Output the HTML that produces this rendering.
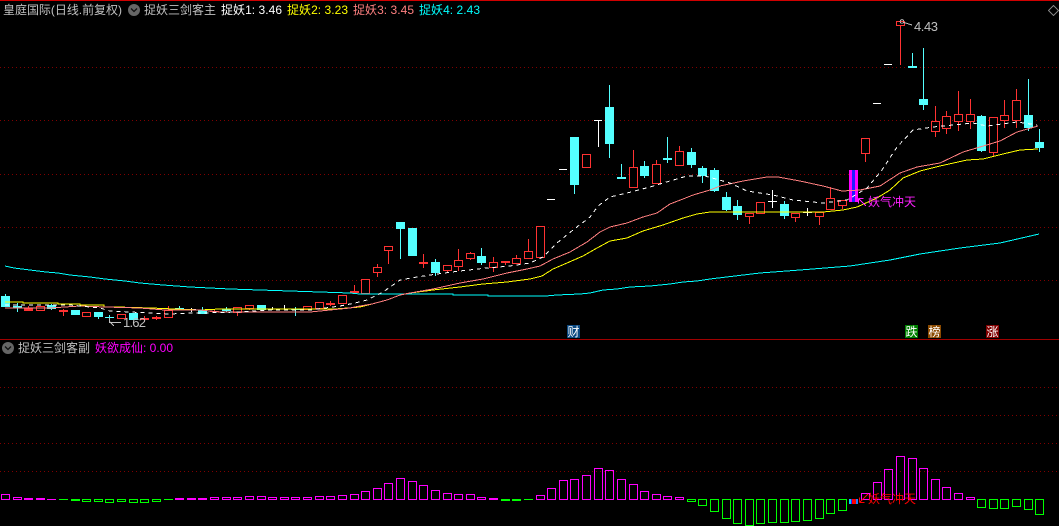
<!DOCTYPE html>
<html><head><meta charset="utf-8"><title>捉妖三剑客</title>
<style>
html,body{margin:0;padding:0;background:#000;width:1059px;height:526px;overflow:hidden}
svg{display:block}
text{font-family:"WenQuanYi Zen Hei","Liberation Sans","Noto Sans CJK SC",sans-serif;font-size:12px}
.n{font-family:"Liberation Sans",sans-serif;font-size:13px}
</style></head><body>
<svg width="1059" height="526" viewBox="0 0 1059 526" xmlns="http://www.w3.org/2000/svg">
<rect width="1059" height="526" fill="#000"/>
<g shape-rendering="crispEdges">
<rect x="0" y="0" width="1059" height="1" fill="#d00000"/>
<rect x="0" y="339" width="1059" height="1" fill="#a00000"/>
<path d="M0 67.5H1059M0 120.5H1059M0 174.5H1059M0 227.5H1059M0 280.5H1059M0 387.5H1059M0 415.5H1059M0 443.5H1059M0 471.5H1059" stroke="#800000" stroke-width="1" stroke-dasharray="1 3" fill="none"/>
<!-- wicks -->
<path fill="none" stroke="#ff3232" d="M28.5 306V311M63.5 309V316M144.5 316V322M156.5 316V320M168.5 306V310M214.5 310V313M237.5 312V316M249.5 308V310M330.5 301V306M354.5 285V293M377.5 264V277M388.5 250V264M423.5 254V268M447.5 270V272M458.5 249V271M470.5 252V260M493.5 257V272M505.5 261V265M516.5 255V258M528.5 239V251M633.5 150V167M656.5 160V164M679.5 146V166M749.5 216V224M795.5 217V222M819.5 216V225M830.5 187V198M842.5 205V209M865.5 153V162M900.5 25V65M935.5 106V137M946.5 111V134M958.5 91V131M970.5 99V129M993.5 152V156M1004.5 100V128M1016.5 89V128"/>
<path fill="none" stroke="#54ffff" d="M5.5 294V296M17.5 303V312M51.5 304V310M98.5 317V319M109.5 315V323M179.5 306V308M202.5 307V314M226.5 307V312M295.5 307V316M400.5 229V259M435.5 259V276M481.5 248V265M574.5 185V194M609.5 85V158M621.5 164V178M644.5 161V178M667.5 137V163M691.5 148V168M702.5 166V183M714.5 168V192M726.5 192V211M737.5 200V220M784.5 201V219M912.5 53V66M923.5 48V110M981.5 115V152M1028.5 79V131M1039.5 129V152"/>
<path fill="none" stroke="#fff" d="M191.5 308V312M187 309.5H196M272.5 307V310M284.5 305V310M547 199.5H555M559 169.5H567M594 120.5H602M598.5 120V147M772.5 190V208M768 201.5H777M807.5 208V216M803 212.5H812M873 103.5H881M884 64.5H892"/>
<!-- red hollow bodies -->
<path fill="#000" stroke="#ff3232" d="M36.5 306.5h8V310.5h-8zM82.5 312.5h8V316.5h-8zM117.5 314.5h8V318.5h-8zM164.5 310.5h8V317.5h-8zM233.5 307.5h8V312.5h-8zM245.5 305.5h8V308.5h-8zM303.5 306.5h8V309.5h-8zM315.5 302.5h8V308.5h-8zM338.5 295.5h8V303.5h-8zM361.5 279.5h8V293.5h-8zM373.5 267.5h8V272.5h-8zM384.5 246.5h8V250.5h-8zM443.5 265.5h8V270.5h-8zM454.5 260.5h8V266.5h-8zM466.5 253.5h8V258.5h-8zM489.5 262.5h8V267.5h-8zM512.5 258.5h8V263.5h-8zM524.5 251.5h8V258.5h-8zM536.5 226.5h8V257.5h-8zM582.5 154.5h8V167.5h-8zM629.5 167.5h8V187.5h-8zM652.5 164.5h8V183.5h-8zM675.5 151.5h8V165.5h-8zM745.5 213.5h8V216.5h-8zM756.5 202.5h8V213.5h-8zM791.5 213.5h8V217.5h-8zM815.5 212.5h8V216.5h-8zM826.5 198.5h8V209.5h-8zM838.5 200.5h8V205.5h-8zM861.5 138.5h8V153.5h-8zM896.5 21.5h8V25.5h-8zM931.5 121.5h8V131.5h-8zM942.5 116.5h8V128.5h-8zM954.5 114.5h8V121.5h-8zM966.5 114.5h8V121.5h-8zM989.5 117.5h8V152.5h-8zM1000.5 115.5h8V120.5h-8zM1012.5 100.5h8V120.5h-8z"/>
<!-- red solid bodies -->
<path fill="#ff3232" d="M24 308h9v3h-9zM59 310h9v2h-9zM140 318h9v2h-9zM152 317h9v2h-9zM210 311h9v1h-9zM326 303h9v2h-9zM350 291h9v2h-9zM419 262h9v2h-9zM501 261h9v2h-9z"/>
<!-- cyan solid bodies -->
<path fill="#54ffff" d="M1 296h9v11h-9zM13 306h9v2h-9zM47 305h9v4h-9zM71 310h9v5h-9zM94 312h9v5h-9zM105 317h9v1h-9zM129 313h9v7h-9zM175 308h9v2h-9zM198 310h9v4h-9zM222 309h9v2h-9zM257 305h9v5h-9zM291 309h9v1h-9zM396 222h9v7h-9zM408 228h9v28h-9zM431 262h9v11h-9zM477 256h9v7h-9zM570 137h9v48h-9zM605 107h9v37h-9zM617 177h9v2h-9zM640 166h9v10h-9zM663 158h9v2h-9zM687 152h9v13h-9zM698 168h9v8h-9zM710 170h9v21h-9zM722 197h9v13h-9zM733 206h9v9h-9zM780 204h9v12h-9zM908 66h9v2h-9zM919 99h9v6h-9zM977 116h9v35h-9zM1024 115h9v13h-9zM1035 142h9v6h-9z"/>
<!-- purple bar -->
<rect x="849" y="170" width="3" height="32" fill="#ff00ff"/><rect x="852" y="170" width="3" height="32" fill="#2020ff"/><rect x="855" y="170" width="3" height="32" fill="#ff00ff"/>
<!-- lines -->
<polyline fill="none" stroke="#00ffff" points="5,266 14,268 30,270 46,272 58,273 70,275 90,277 105,279 125,281 140,283 163,285 190,287 210,288 230,289 260,290 290,291 320,292 350,293 360,294 453,294 453,295 488,295 488,296 546,296 557,295 580,294 590,293 603,290 617,289 630,287 650,286 670,284 683,282 697,281 710,279 760,273 800,270 850,266 890,260 920,254 960,248 1000,243 1039,234"/>
<polyline fill="none" stroke="#ffff00" points="5,302 23,302 23,303 58,303 58,304 80,304 80,305 104,305 104,307 116,307 151,308 174,309 200,310 220,309 310,309 335,309 348,308 360,307 372,304 387,300 400,295 410,293 433,290 460,287 483,284 507,282 530,279 542,276 553,269 567,263 583,256 597,248 610,241 627,238 643,231 663,225 683,218 697,214 710,212 823,212 843,210 857,207 877,198 890,190 903,178 920,171 940,166 967,160 983,159 1003,154 1020,150 1038,149"/>
<polyline fill="none" stroke="#ff8080" points="5,308 50,308 80,306 105,307 140,308 165,310 200,310 220,312 310,312 320,311 340,309 350,308 360,306 372,304 387,300 400,295 410,293 433,289 460,283 483,279 507,273 527,269 540,266 553,259 570,252 587,242 600,232 610,227 627,223 643,217 657,213 670,204 683,199 693,195 710,190 720,186 743,181 767,177 778,177 800,181 823,186 842,191 860,190 880,186 900,173 917,167 940,163 963,152 980,147 1000,141 1017,132 1038,126"/>
<polyline fill="none" stroke="#fff" stroke-dasharray="4 4" points="5,305 70,305 100,308 110,311 130,312 150,313 170,314 190,313 200,313 240,312 270,310 310,310 340,306 355,303 367,300 383,292 400,280 417,277 437,274 460,271 487,268 510,266 530,263 543,257 557,243 573,230 590,217 598,206 610,197 627,193 650,187 670,181 687,176 705,176 730,183 747,191 773,195 793,200 823,203 847,200 867,188 882,170 897,147 913,130 933,127 973,123 987,126 1017,122 1037,125"/>
<!-- sub chart magenta -->
<path fill="none" stroke="#ff00ff" d="M1.5 494.5h8V499.5h-8zM13.5 497.5h8V499.5h-8zM210.5 497.5h8V499.5h-8zM222.5 497.5h8V499.5h-8zM233.5 497.5h8V499.5h-8zM245.5 496.5h8V499.5h-8zM257.5 496.5h8V499.5h-8zM268.5 497.5h8V499.5h-8zM280.5 497.5h8V499.5h-8zM291.5 497.5h8V499.5h-8zM303.5 497.5h8V499.5h-8zM315.5 496.5h8V499.5h-8zM326.5 496.5h8V499.5h-8zM338.5 495.5h8V499.5h-8zM350.5 494.5h8V499.5h-8zM361.5 491.5h8V499.5h-8zM373.5 488.5h8V499.5h-8zM384.5 483.5h8V499.5h-8zM396.5 478.5h8V499.5h-8zM408.5 481.5h8V499.5h-8zM419.5 485.5h8V499.5h-8zM431.5 490.5h8V499.5h-8zM443.5 493.5h8V499.5h-8zM454.5 494.5h8V499.5h-8zM466.5 494.5h8V499.5h-8zM477.5 497.5h8V499.5h-8zM536.5 495.5h8V499.5h-8zM547.5 488.5h8V499.5h-8zM559.5 480.5h8V499.5h-8zM570.5 479.5h8V499.5h-8zM582.5 475.5h8V499.5h-8zM594.5 468.5h8V499.5h-8zM605.5 470.5h8V499.5h-8zM617.5 479.5h8V499.5h-8zM629.5 484.5h8V499.5h-8zM640.5 491.5h8V499.5h-8zM652.5 494.5h8V499.5h-8zM663.5 496.5h8V499.5h-8zM675.5 497.5h8V499.5h-8zM861.5 493.5h8V499.5h-8zM873.5 482.5h8V499.5h-8zM884.5 469.5h8V499.5h-8zM896.5 456.5h8V499.5h-8zM908.5 458.5h8V499.5h-8zM919.5 468.5h8V499.5h-8zM931.5 479.5h8V499.5h-8zM942.5 487.5h8V499.5h-8zM954.5 493.5h8V499.5h-8zM966.5 497.5h8V499.5h-8z"/>
<path fill="#ff00ff" d="M24 498h9v2h-9zM36 498h9v2h-9zM47 499h9v1h-9zM175 498h9v2h-9zM187 498h9v2h-9zM198 498h9v2h-9zM489 498h9v2h-9z"/>
<!-- sub chart green -->
<path fill="none" stroke="#00ff00" d="M82.5 499.5h8V501.5h-8zM94.5 499.5h8V501.5h-8zM105.5 499.5h8V502.5h-8zM117.5 499.5h8V501.5h-8zM129.5 499.5h8V502.5h-8zM140.5 499.5h8V502.5h-8zM152.5 499.5h8V501.5h-8zM687.5 499.5h8V501.5h-8zM698.5 499.5h8V505.5h-8zM710.5 499.5h8V511.5h-8zM722.5 499.5h8V518.5h-8zM733.5 499.5h8V523.5h-8zM745.5 499.5h8V525.5h-8zM756.5 499.5h8V523.5h-8zM768.5 499.5h8V522.5h-8zM780.5 499.5h8V522.5h-8zM791.5 499.5h8V521.5h-8zM803.5 499.5h8V520.5h-8zM815.5 499.5h8V518.5h-8zM826.5 499.5h8V513.5h-8zM838.5 499.5h8V510.5h-8zM977.5 499.5h8V507.5h-8zM989.5 499.5h8V508.5h-8zM1000.5 499.5h8V508.5h-8zM1012.5 499.5h8V506.5h-8zM1024.5 499.5h8V509.5h-8zM1035.5 499.5h8V514.5h-8z"/>
<path fill="#00ff00" d="M59 499h9v1h-9zM71 499h9v2h-9zM164 499h9v1h-9zM501 499h9v2h-9zM512 499h9v2h-9zM524 499h9v1h-9z"/>
<rect x="849" y="499" width="2" height="5" fill="#00d0ff"/><rect x="851" y="499" width="1" height="5" fill="#2020ff"/><rect x="852" y="499" width="4" height="5" fill="#ff0000"/><rect x="856" y="499" width="2" height="5" fill="#2080ff"/>
<!-- marker tags -->
<rect x="567" y="325" width="13" height="13" fill="#0a4880"/>
<rect x="905" y="325" width="13" height="13" fill="#008000"/>
<rect x="928" y="325" width="13" height="13" fill="#8b4a00"/>
<rect x="986" y="325" width="13" height="13" fill="#800000"/>
<!-- top right diamond -->
<path d="M1053.5 5.5L1058.5 10.5L1053.5 15.5L1048.5 10.5Z" fill="none" stroke="#808080"/>
<!-- annotation arrows -->
<path d="M109.5 318V322.5H121M110 322L114 326" fill="none" stroke="#c0c0c0"/>
<path d="M904 22.5L912 25" fill="none" stroke="#c0c0c0"/>
<circle cx="902" cy="21.5" r="1.8" fill="none" stroke="#c0c0c0"/>
<path d="M858.5 198.5L866 206M858.5 198.5h5M858.5 198.5v5" fill="none" stroke="#ff20ff"/>
<path d="M859.5 502.5L868 494M859.5 502.5h5M859.5 502.5v-5" fill="none" stroke="#ff0000"/>
</g>
<!-- icons -->
<circle cx="134" cy="10" r="6" fill="#666"/><path d="M131 8.5L134 11.5L137 8.5" fill="none" stroke="#111" stroke-width="1.3"/>
<circle cx="8" cy="348" r="6" fill="#666"/><path d="M5 346.5L8 349.5L11 346.5" fill="none" stroke="#111" stroke-width="1.3"/>
<!-- texts -->
<text x="3" y="14" fill="#c0c0c0" textLength="119">皇庭国际(日线.前复权)</text>
<text x="144" y="14" fill="#c0c0c0" textLength="72">捉妖三剑客主</text>
<text x="221" y="14" fill="#ffffff" textLength="61">捉妖1: 3.46</text>
<text x="287" y="14" fill="#ffff00" textLength="61">捉妖2: 3.23</text>
<text x="353" y="14" fill="#ff8080" textLength="61">捉妖3: 3.45</text>
<text x="419" y="14" fill="#00ffff" textLength="61">捉妖4: 2.43</text>
<text x="18" y="352" fill="#c0c0c0" textLength="72">捉妖三剑客副</text>
<text x="95" y="352" fill="#ff00ff" textLength="78">妖欲成仙: 0.00</text>
<text class="n" x="123" y="327" fill="#c0c0c0" textLength="23">1.62</text>
<text class="n" x="914" y="31" fill="#c0c0c0" textLength="24">4.43</text>
<text x="868" y="206" fill="#ff20ff" textLength="48">妖气冲天</text>
<text x="868" y="503" fill="#ff0000" textLength="48">妖气冲天</text>
<text x="567.5" y="336" fill="#fff">财</text>
<text x="905.5" y="336" fill="#fff">跌</text>
<text x="928.5" y="336" fill="#fff">榜</text>
<text x="986.5" y="336" fill="#fff">涨</text>
</svg>
</body></html>
